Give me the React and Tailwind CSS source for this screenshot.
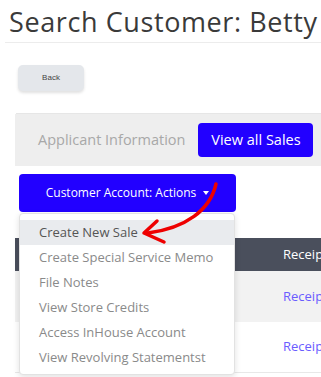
import React from "react";

export default function App() {
  const items = [
    "Create New Sale",
    "Create Special Service Memo",
    "File Notes",
    "View Store Credits",
    "Access InHouse Account",
    "View Revolving Statementst",
  ];
  return (
    <div
      className="relative w-[321px] h-[377px] overflow-hidden bg-white"
      style={{ fontFamily: '"Open Sans", "DejaVu Sans", sans-serif' }}
    >
      <div className="h-[43px] ml-[5px] border-b border-[#ececec] flex items-center">
        <h1 className="pl-[4px] text-[27px] leading-none text-[#3a3a3a] whitespace-nowrap tracking-[0.6px]">
          Search Customer: Betty
        </h1>
      </div>
      <div className="pt-[19px] pl-[18px] h-[70px]">
        <button className="w-[66px] h-[26px] rounded-[5px] bg-[#e4e7eb] shadow-[0_2px_3px_rgba(0,0,0,0.12)] text-[8px] text-[#444]" style={{ fontFamily: '"Liberation Sans", sans-serif' }}>
          Back
        </button>
      </div>
      <div className="ml-[16px] border-t border-[#e6e6e6]" />
      <div className="ml-[15px] h-[52px] bg-[#eeeeee] flex items-center">
        <span className="ml-[23px] text-[14.5px] text-[#a8a8a8] whitespace-nowrap">Applicant Information</span>
        <button className="ml-[13px] w-[115px] h-[34px] rounded-[4px] bg-[#2200ff] text-white text-[14.5px] whitespace-nowrap">
          View all Sales
        </button>
      </div>
      <div className="mt-[8px] ml-[19px] w-[217px] h-[38px] rounded-[4px] bg-[#2200ff] flex items-center justify-center text-white text-[12px]">
        Customer Account: Actions
        <span className="ml-[7px] inline-block w-0 h-0 border-l-[3px] border-r-[3px] border-t-[4px] border-l-transparent border-r-transparent border-t-white" />
      </div>
      <div className="mt-[26px] ml-[15px]">
        <div className="h-[33px] bg-[#4a4f5c] flex items-center">
          <span className="ml-[268px] text-white text-[13px] whitespace-nowrap">Receipt</span>
        </div>
        <div className="h-[51px] bg-[#f2f2f2] flex items-center">
          <span className="ml-[268px] text-[#6a5cff] text-[13px] whitespace-nowrap">Receipt</span>
        </div>
        <div className="h-[51px] bg-white border-b border-[#e8e8e8] flex items-center">
          <span className="ml-[268px] text-[#6a5cff] text-[13px] whitespace-nowrap">Receipt</span>
        </div>
      </div>

      <div className="absolute left-[19px] top-[213px] w-[216px] h-[162px] bg-white rounded-[4px] border border-[#e2e2e2] shadow-[0_2px_6px_rgba(0,0,0,0.12)] pt-[6px]">
        {items.map((t, i) => (
          <div
            key={t}
            className={
              "h-[25px] flex items-center pl-[19px] text-[13px] whitespace-nowrap " +
              (i === 0 ? "bg-[#e9ebee] text-[#555]" : "text-[#8a8a8a]")
            }
          >
            {t}
          </div>
        ))}
      </div>

      <svg className="absolute left-0 top-0 pointer-events-none" width="321" height="377" viewBox="0 0 321 377">
        <path d="M216 184 C 210 210, 186 228, 148 233" stroke="#ee0000" strokeWidth="3.5" fill="none" strokeLinecap="round" />
        <path d="M157 221 L 144 233 L 164 242" stroke="#ee0000" strokeWidth="3.5" fill="none" strokeLinecap="round" strokeLinejoin="round" />
      </svg>
    </div>
  );
}
